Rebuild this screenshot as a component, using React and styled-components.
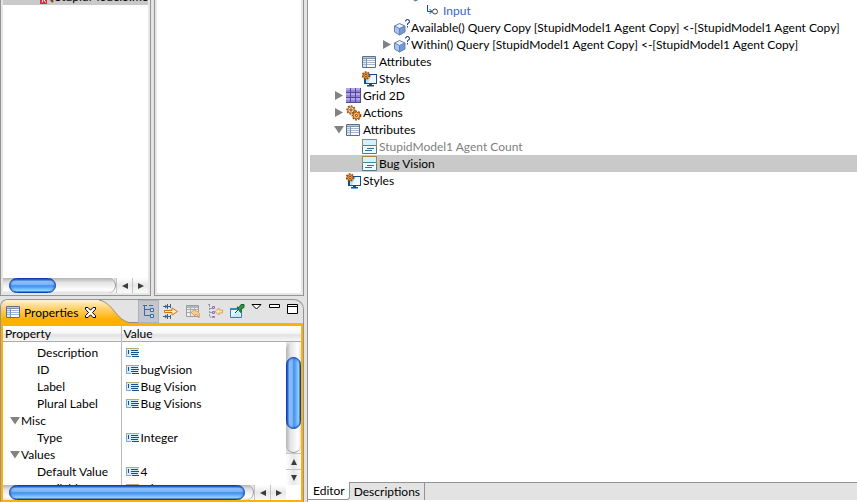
import React from "react";
import styled, { createGlobalStyle, css } from "styled-components";

const GlobalStyle = createGlobalStyle`
  * { box-sizing: border-box; }
  html, body, #root { height: 100%; }
  body {
    margin: 0;
    overflow: hidden;
    background: #e3e3e3;
    color: #000;
    font: 12px/17px Lato, "Open Sans", sans-serif;
  }
  button { margin: 0; padding: 0; border: 0; background: none; color: inherit; font: inherit; }
  svg { display: block; flex: none; }
`;

const Workbench = styled.main`
  display: grid;
  grid-template-columns: 304px 1fr;
  gap: 3px;
  height: 100vh;
`;

const SideColumn = styled.div`
  display: grid;
  grid-template-rows: 296px 1fr;
  gap: 3px;
  min-height: 0;
`;

const PanePair = styled.div`
  display: grid;
  grid-template-columns: 151px 1fr;
  gap: 3px;
  min-height: 0;
`;

const Pane = styled.section`
  display: flex;
  flex-direction: column;
  border: 1px solid #949494;
  border-top: 0;
  padding: 0 2px 2px;
  background: #e6e6e6;
  overflow: hidden;
`;

const PaneBody = styled.div`
  flex: 1;
  min-height: 0;
  overflow: hidden;
  background: #fff;
`;

const FileRow = styled.div`
  display: flex;
  align-items: center;
  gap: 1px;
  height: 17px;
  margin-top: -12px;
  padding-left: 35px;
  background: #c9c9c9;
  white-space: nowrap;
`;

/* Scroll bars */

const Bar = styled.div`
  display: flex;
  flex: none;
  flex-direction: ${(p) => (p.$vertical ? "column" : "row")};
  ${(p) => (p.$vertical ? "width: 15px; min-height: 0;" : "height: 15px;")}
  background: linear-gradient(${(p) => (p.$vertical ? "to right" : "to bottom")}, #dcdcdc, #fff 70%, #f0f0f0);
`;

const Track = styled.div`
  display: flex;
  flex: 1;
  flex-direction: ${(p) => (p.$vertical ? "column" : "row")};
  ${(p) =>
    p.$vertical
      ? "padding-top: 15px; border-radius: 8px; border-bottom: 1px solid #999;"
      : "padding-left: 6px; border-radius: 0 8px 8px 0; border-right: 1px solid #999;"}
  background: linear-gradient(${(p) => (p.$vertical ? "to right" : "to bottom")}, #b4b4b4, #e4e4e4 30%, #fff 80%, #e0e0e0);
`;

const Thumb = styled.div`
  flex: 0 0 ${(p) => p.$size};
  border: 1px solid #0d3fae;
  border-radius: 8px;
  background: linear-gradient(
    ${(p) => (p.$vertical ? "to right" : "to bottom")},
    #1c57cf, #8fc0f8 20%, #7ab4f6 42%, #3f90ee 52%, #6bb0fa 72%, #a2dcff 92%, #3c74b8
  );
  box-shadow: inset 0 0 2px #0a3db5;
`;

const ArrowButton = styled.button`
  display: grid;
  flex: 0 0 16px;
  place-items: center;
  border: solid #c4c4c4;
  border-width: ${(p) => (p.$vertical ? "1px 0 0" : "0 0 0 1px")};
  background: linear-gradient(${(p) => (p.$vertical ? "to right" : "to bottom")}, #fff, #e8e8e8 50%, #fafafa);
`;

const Arrow = ({ dir }) => {
  const d = { left: "M7 1v6L1 4z", right: "M1 1v6l6-3z", up: "M1 7h6L4 1z", down: "M1 1h6L4 7z" }[dir];
  return (
    <svg width="8" height="8" viewBox="0 0 8 8" aria-hidden="true">
      <path d={d} fill="#3c3c3c" />
    </svg>
  );
};

function ScrollBar({ vertical, size }) {
  const [back, forward] = vertical ? ["up", "down"] : ["left", "right"];
  return (
    <Bar $vertical={vertical}>
      <Track $vertical={vertical}>
        <Thumb $vertical={vertical} $size={size} />
      </Track>
      <ArrowButton $vertical={vertical} aria-label={`Scroll ${back}`}>
        <Arrow dir={back} />
      </ArrowButton>
      <ArrowButton $vertical={vertical} aria-label={`Scroll ${forward}`}>
        <Arrow dir={forward} />
      </ArrowButton>
    </Bar>
  );
}

/* Properties view */

const View = styled.section`
  display: flex;
  flex-direction: column;
  min-height: 0;
  border: 1px solid #949494;
  border-bottom: 0;
  border-radius: 8px 10px 0 0;
  overflow: hidden;
`;

const ViewHeader = styled.header`
  display: flex;
  flex: none;
  height: 23px;
`;

const ViewTab = styled.div`
  display: flex;
  align-items: center;
  gap: 4px;
  width: 98px;
  padding: 1px 0 0 5px;
  background: linear-gradient(#fff3d6, #ffd373 35%, #ffb000 85%);
`;

const ViewTitle = styled.h2`
  margin: 0;
  font-size: 12px;
  font-weight: 400;
`;

const CloseButton = styled.button`
  margin-left: 3px;
`;

const Toolbar = styled.div`
  display: flex;
  flex: 1;
  gap: 1px;
`;

const ToolButton = styled.button`
  display: flex;
  justify-content: center;
  width: 21px;
  padding-top: 3px;
  ${(p) =>
    p.$on &&
    css`
      background: #c3c7cd;
      outline: 1px solid #adb3bd;
      outline-offset: -1px;
    `}
`;

const ViewButton = styled(ToolButton)`
  width: 17px;
`;

const ViewFrame = styled.div`
  display: flex;
  flex: 1;
  flex-direction: column;
  min-height: 0;
  border: 2px solid #ffb000;
  border-top-width: 3px;
  background: #fff;
`;

const TableHead = styled.table`
  flex: none;
  width: 100%;
  border-collapse: collapse;
  table-layout: fixed;
  border-bottom: 1px solid #aaa;
  background: linear-gradient(#fff, #f6f6f6 45%, #e2e2e2 55%, #fafafa);
  th {
    height: 15px;
    padding: 0 0 0 2px;
    font-weight: 400;
    line-height: 15px;
    text-align: left;
  }
  th:first-child { width: 118px; border-right: 1px solid #bbb; }
`;

const ScrollRegion = styled.div`
  display: flex;
  flex: 1;
  min-height: 0;
`;

const TableViewport = styled.div`
  flex: 1;
  min-width: 0;
  overflow: hidden;
`;

const PropertyTable = styled.table`
  width: 100%;
  border-collapse: collapse;
  table-layout: fixed;
  td, th {
    height: 17px;
    padding: 0 0 0 4px;
    font-weight: 400;
    line-height: 17px;
    text-align: left;
    white-space: nowrap;
  }
  th { border-right: 1px solid #bbb; }
  tr:first-child > * { height: 19px; padding-top: 2px; }
`;

const NameColumn = styled.col`
  width: 118px;
`;

const NameCell = styled.div`
  display: flex;
  align-items: center;
  gap: 1px;
  padding-left: ${(p) => (p.$group ? 3 : 30)}px;
`;

const ValueCell = styled.div`
  display: flex;
  align-items: center;
  gap: 2px;
`;

const BottomBar = styled.div`
  display: grid;
  flex: none;
  grid-template-columns: 1fr 15px;
`;

/* Editor */

const EditorPane = styled.section`
  display: flex;
  flex-direction: column;
  min-width: 0;
  min-height: 0;
  border-left: 1px solid #949494;
  background: #fff;
`;

const Tree = styled.div`
  flex: 1;
  min-height: 0;
  padding-left: 2px;
  overflow: hidden;
  & > :first-child { margin-top: -15px; }
`;

const TreeRow = styled.div`
  display: flex;
  align-items: center;
  height: 17px;
  padding-left: ${(p) => 24 + p.$level * 16}px;
  color: ${(p) => ({ muted: "#808080", link: "#3a5fcd" })[p.$tone] || "#000"};
  background: ${(p) => (p.$selected ? "#c9c9c9" : "transparent")};
  white-space: nowrap;
`;

const ArrowSlot = styled.span`
  display: grid;
  flex: 0 0 12px;
  place-items: center start;
`;

const IconSlot = styled.span`
  display: grid;
  flex: 0 0 17px;
  place-items: center start;
`;

const EditorTabs = styled.div`
  display: flex;
  flex: none;
  height: 20px;
  padding-bottom: 2px;
`;

const EditorTab = styled.button`
  padding: 0 4px 1px;
  border: solid #949494;
  border-width: ${(p) => (p.$active ? "0 1px 1px 0" : "1px 1px 0 0")};
  border-bottom-right-radius: ${(p) => (p.$active ? 3 : 0)}px;
  background: ${(p) => (p.$active ? "#fff" : "#e3e3e3")};
  &:first-child { padding-left: 5px; }
`;

const TabFill = styled.div`
  flex: 1;
  border-top: 1px solid #949494;
  background: #e3e3e3;
`;

/* Icons */

const Disclosure = ({ open }) => (
  <svg width="10" height="9" viewBox="0 0 10 9" aria-hidden="true">
    <path d={open ? "M0 1h10L5 8.500z" : "M1 0v9l8-4.500z"} fill="#828282" />
  </svg>
);

const TableIcon = () => (
  <svg width="14" height="12" viewBox="0 0 14 12" aria-hidden="true">
    <path d="M.5.5h13v11H.5z" fill="#fff" stroke="#5b6f86" />
    <path d="M1 1h12v2H1z" fill="#b4cae0" />
    <path d="M1 3h3v8H1z" fill="#d4e7f6" />
    <path d="M1 2.500h12" stroke="#8193a8" />
    <path d="M1 4.500h12M1 6.500h12M1 8.500h12" stroke="#a3b8cf" />
    <path d="M4.500 3v8" stroke="#7f93ab" />
  </svg>
);

const ValueIcon = () => (
  <svg width="13" height="9" viewBox="0 0 13 9" aria-hidden="true">
    <path d="M0 0h13v9H0z" fill="#d6eef9" />
    <path d="M.5 1v7.500H5" fill="none" stroke="#79a9cd" />
    <path d="M0 .5h13" fill="none" stroke="#bda873" />
    <path d="M2.500 2v4M5 2.500h7M5 4.500h8M5 6.500h7M6 8.500h7" stroke="#17508c" />
  </svg>
);

const AttributeIcon = () => (
  <svg width="15" height="15" viewBox="0 0 15 15" aria-hidden="true">
    <path d="M.5.5h14v14H.5z" fill="#d0f4fb" stroke="#4d7a96" />
    <path d="M.5 8V.5h14V8" fill="none" stroke="#a48a48" />
    <path d="M1 7h13v7H1z" fill="#eefaff" />
    <path d="M1 6.500h13" stroke="#3f8798" />
    <path d="M5 9.500h7M3 11.500h7" stroke="#3d6d9d" />
  </svg>
);

const CubeIcon = () => (
  <svg width="17" height="17" viewBox="1 0 17 17" aria-hidden="true">
    <path d="M6.500 4.500L12 7v6l-5.500 3L1.500 13V7z" fill="#a8c5ee" />
    <path d="M6.500 4.500L12 7 6.500 9.500 1.500 7z" fill="#e4f0ff" />
    <path d="M6.500 9.500V16L12 13V7z" fill="#7898d0" />
    <path d="M1.500 7l5 2.500L12 7M6.500 9.500V16M6.500 4.500L12 7v6l-5.500 3-5-3V7z" fill="none" stroke="#6580b4" />
    <path d="M12.500 2.500V1.500h1V.5h2v1h1v2h-1v1h-1v1.500M14.500 7v1.500" fill="none" stroke="#26458b" />
  </svg>
);

const InputIcon = () => (
  <svg width="13" height="11" viewBox="0 0 13 11" aria-hidden="true">
    <path d="M1.500 0v6.500H6M3.500 4l2.500 2.500L3.500 9" fill="none" stroke="#0b4b93" />
    <circle cx="9" cy="6.500" r="2.500" fill="#fff" stroke="#444" />
  </svg>
);

const Gear = ({ x, y, r, fill }) => (
  <g transform={`translate(${x} ${y})`}>
    <circle r={r} fill="none" stroke="#8a430c" strokeWidth="2" strokeDasharray="1.600 1.200" />
    <circle r={r - 0.500} fill={fill} stroke="#b0600f" />
    <circle r="1.100" fill="#fff3d8" stroke="#7c3909" />
  </g>
);

const StylesIcon = () => (
  <svg width="17" height="16" viewBox="1 0 17 16" aria-hidden="true">
    <path d="M3 3h13v10H3z" fill="#0d4f91" />
    <path d="M5 4h10v8H5z" fill="#b9e0fb" />
    <path d="M11 4h4v8H7z" fill="#eefaff" />
    <path d="M8 13h3v1h2v1.500H6V14h2z" fill="#0d4f91" />
    <Gear x={5} y={4.500} r={3.300} fill="#f8a636" />
  </svg>
);

const ActionsIcon = () => (
  <svg width="16" height="16" viewBox="0 0 16 16" aria-hidden="true">
    <Gear x={5} y={5} r={3.700} fill="#fbe0b4" />
    <Gear x={10.500} y={10.500} r={3.900} fill="#f5ba68" />
  </svg>
);

const GridIcon = () => (
  <svg width="15" height="15" viewBox="0 0 15 15" aria-hidden="true">
    <path d="M0 0h15v15H0z" fill="#9385d6" />
    <path d="M0 0h15v2H0zM0 5h15v2H0zM0 10h15v2H0z" fill="#b3a9e6" />
    <path d="M4.500 0v15M9.500 0v15M14.500 0v15M0 4.500h15M0 9.500h15M0 14.500h15" stroke="#53499a" />
  </svg>
);

const FileIcon = () => (
  <svg width="16" height="15" viewBox="0 0 16 15" aria-hidden="true">
    <path d="M10 7l5 6" stroke="#7c3b2c" strokeWidth="2" />
    <path d="M2 6h7v9H2z" fill="#e8203c" />
    <path d="M4 13.500l1.500-4 2 4" fill="none" stroke="#fff" />
  </svg>
);

const CloseIcon = () => (
  <svg width="11" height="11" viewBox="0 0 11 11" aria-hidden="true">
    <path
      d="M.5.5h2.500l2.500 2.700L8 .5h2.500v1.800L7.500 5.500l3 3.200v1.800H8L5.500 7.800 3 10.500H.5V8.700l3-3.200-3-3.200z"
      fill="#fff"
      stroke="#000"
    />
  </svg>
);

const TabCurve = () => (
  <svg width="39" height="23" viewBox="0 0 39 23" aria-hidden="true">
    <defs>
      <linearGradient id="tab-fill" x2="0" y2="1">
        <stop stopColor="#fff3d6" />
        <stop offset=".35" stopColor="#ffd373" />
        <stop offset=".85" stopColor="#ffb000" />
      </linearGradient>
    </defs>
    <path d="M0 0C8 2 12 7 16 12S24 21 30 23H0z" fill="url(#tab-fill)" />
    <path d="M0 0C8 2 12 7 16 12S24 21 30 22.500h9" fill="none" stroke="#9c8c70" />
  </svg>
);

const TreeModeIcon = () => (
  <svg width="16" height="16" viewBox="0 0 16 16" fill="none" stroke="#386aa6" aria-hidden="true">
    <path d="M2 2.500h4M3.500 3v9.500H9M3.500 6.500H9M8 2.500h4" />
    <path d="M9.500 5.500h3v3h-3zM9.500 11.500h3v3h-3z" fill="#cfe0f2" />
  </svg>
);

const FilterIcon = () => (
  <svg width="17" height="16" viewBox="0 0 17 16" aria-hidden="true">
    <path d="M1 3.500h7M1 13.500h7M5.500 1v5M5.500 11v5M8.500 1v4M8.500 12v4M3 2l2 1.500L3 5M3 12l2 1.500L3 15" fill="none" stroke="#446078" />
    <path d="M2.500 7.500H10V5l5.500 3.500L10 12V9.500H2.500z" fill="#fff0bd" stroke="#cf7412" />
  </svg>
);

const RestoreIcon = () => (
  <svg width="16" height="16" viewBox="0 0 16 16" aria-hidden="true">
    <path d="M1.500 2.500h12v11h-12z" fill="#eee" stroke="#9d9d9d" />
    <path d="M2 3h11v2H2z" fill="#a9b6c4" />
    <path d="M2 6.500h11M2 9.500h11M5.500 5v8M9.500 5v8" stroke="#aaa" />
    <path d="M6 9.500L10 6v2c4 0 5 3 4 7-1-3-2-3.500-4-3.500V13z" fill="#f7ce95" stroke="#d79b59" />
  </svg>
);

const CollapseIcon = () => (
  <svg width="16" height="16" viewBox="0 0 16 16" aria-hidden="true">
    <path d="M1 1.500h3M2.500 2v12H5M3 5.500h2M3 9.500h2" fill="none" stroke="#8a9bb0" strokeDasharray="2 1" />
    <path d="M5.500 3.500h2v2h-2zM5.500 8.500h2v2h-2zM5.500 13.500h2v1h-2z" fill="#d5bbea" stroke="#9377ae" />
    <path d="M8 8.500L12 5v2h3.500v3H12v2z" fill="#fbe3ba" stroke="#d9a361" />
  </svg>
);

const PinIcon = () => (
  <svg width="16" height="16" viewBox="0 0 16 16" aria-hidden="true">
    <path d="M1.500 5.500h11v9h-11z" fill="#e8f7ff" stroke="#3f7ea6" />
    <path d="M1 5h12v2H1z" fill="#3489bd" />
    <path d="M2 14l8-6 2 6z" fill="#c9e9fa" />
    <path d="M6 10l4-4" stroke="#333" />
    <path d="M8 4l2 .5 2-3h3v3l-3 1.500.5 2.500-1 1z" fill="#359447" stroke="#176329" />
  </svg>
);

const MenuIcon = () => (
  <svg width="11" height="12" viewBox="0 0 11 12" aria-hidden="true">
    <path d="M1 1.500h9L5.500 6z" fill="#fff" stroke="#000" />
  </svg>
);

const MinimizeIcon = () => (
  <svg width="11" height="12" viewBox="0 0 11 12" aria-hidden="true">
    <path d="M.5 1.500h10v3H.5z" fill="#fff" stroke="#000" />
  </svg>
);

const MaximizeIcon = () => (
  <svg width="11" height="12" viewBox="0 0 11 12" aria-hidden="true">
    <path d="M.5 1.500h10v9H.5zM.5 3.500h10" fill="#fff" stroke="#000" />
  </svg>
);

/* Data */

const properties = [
  { name: "Description", value: "" },
  { name: "ID", value: "bugVision" },
  { name: "Label", value: "Bug Vision" },
  { name: "Plural Label", value: "Bug Visions" },
  { name: "Misc", group: true },
  { name: "Type", value: "Integer" },
  { name: "Values", group: true },
  { name: "Default Value", value: "4" },
  { name: "Available", value: "false" },
];

const nodes = [
  { level: 4, icon: CubeIcon, text: "Within() Query [StupidModel1 Agent Copy] <-[StupidModel1 Agent Copy]", tone: "muted" },
  { level: 5, icon: InputIcon, text: "Input", tone: "link" },
  { level: 3, icon: CubeIcon, text: "Available() Query Copy [StupidModel1 Agent Copy] <-[StupidModel1 Agent Copy]" },
  { level: 3, icon: CubeIcon, text: "Within() Query [StupidModel1 Agent Copy] <-[StupidModel1 Agent Copy]", arrow: "closed" },
  { level: 1, icon: TableIcon, text: "Attributes" },
  { level: 1, icon: StylesIcon, text: "Styles" },
  { level: 0, icon: GridIcon, text: "Grid 2D", arrow: "closed" },
  { level: 0, icon: ActionsIcon, text: "Actions", arrow: "closed" },
  { level: 0, icon: TableIcon, text: "Attributes", arrow: "open" },
  { level: 1, icon: AttributeIcon, text: "StupidModel1 Agent Count", tone: "muted" },
  { level: 1, icon: AttributeIcon, text: "Bug Vision", selected: true },
  { level: 0, icon: StylesIcon, text: "Styles" },
];

const tools = [
  { label: "Show Categories", icon: TreeModeIcon, on: true },
  { label: "Show Advanced Properties", icon: FilterIcon },
  { label: "Restore Default Value", icon: RestoreIcon },
  { label: "Collapse", icon: CollapseIcon },
  { label: "Pin to Selection", icon: PinIcon },
];

const viewTools = [
  { label: "View Menu", icon: MenuIcon },
  { label: "Minimize", icon: MinimizeIcon },
  { label: "Maximize", icon: MaximizeIcon },
];

function PropertiesView() {
  return (
    <View>
      <ViewHeader>
        <ViewTab>
          <TableIcon />
          <ViewTitle>Properties</ViewTitle>
          <CloseButton aria-label="Close">
            <CloseIcon />
          </CloseButton>
        </ViewTab>
        <TabCurve />
        <Toolbar>
          {tools.map(({ label, icon: Icon, on }) => (
            <ToolButton key={label} aria-label={label} $on={on}>
              <Icon />
            </ToolButton>
          ))}
          {viewTools.map(({ label, icon: Icon }) => (
            <ViewButton key={label} aria-label={label}>
              <Icon />
            </ViewButton>
          ))}
        </Toolbar>
      </ViewHeader>
      <ViewFrame>
        <TableHead>
          <thead>
            <tr>
              <th>Property</th>
              <th>Value</th>
            </tr>
          </thead>
        </TableHead>
        <ScrollRegion>
          <TableViewport>
            <PropertyTable>
              <colgroup>
                <NameColumn />
                <col />
              </colgroup>
              <tbody>
                {properties.map(({ name, value, group }) => (
                  <tr key={name}>
                    <th scope="row">
                      <NameCell $group={group}>
                        {group && <Disclosure open />}
                        {name}
                      </NameCell>
                    </th>
                    <td>
                      {!group && (
                        <ValueCell>
                          <ValueIcon />
                          {value}
                        </ValueCell>
                      )}
                    </td>
                  </tr>
                ))}
              </tbody>
            </PropertyTable>
          </TableViewport>
          <ScrollBar vertical size="72px" />
        </ScrollRegion>
        <BottomBar>
          <ScrollBar size="236px" />
        </BottomBar>
      </ViewFrame>
    </View>
  );
}

export default function App() {
  return (
    <>
      <GlobalStyle />
      <Workbench>
        <SideColumn>
          <PanePair>
            <Pane>
              <PaneBody>
                <FileRow>
                  <FileIcon />
                  StupidModel3.metaabm
                </FileRow>
              </PaneBody>
              <ScrollBar size="47px" />
            </Pane>
            <Pane>
              <PaneBody />
            </Pane>
          </PanePair>
          <PropertiesView />
        </SideColumn>
        <EditorPane>
          <Tree role="tree">
            {nodes.map(({ level, icon: Icon, text, tone, arrow, selected }, i) => (
              <TreeRow key={i} role="treeitem" aria-selected={!!selected} $level={level} $tone={tone} $selected={selected}>
                <ArrowSlot>{arrow && <Disclosure open={arrow === "open"} />}</ArrowSlot>
                <IconSlot>
                  <Icon />
                </IconSlot>
                {text}
              </TreeRow>
            ))}
          </Tree>
          <EditorTabs>
            <EditorTab $active>Editor</EditorTab>
            <EditorTab>Descriptions</EditorTab>
            <TabFill />
          </EditorTabs>
        </EditorPane>
      </Workbench>
    </>
  );
}
